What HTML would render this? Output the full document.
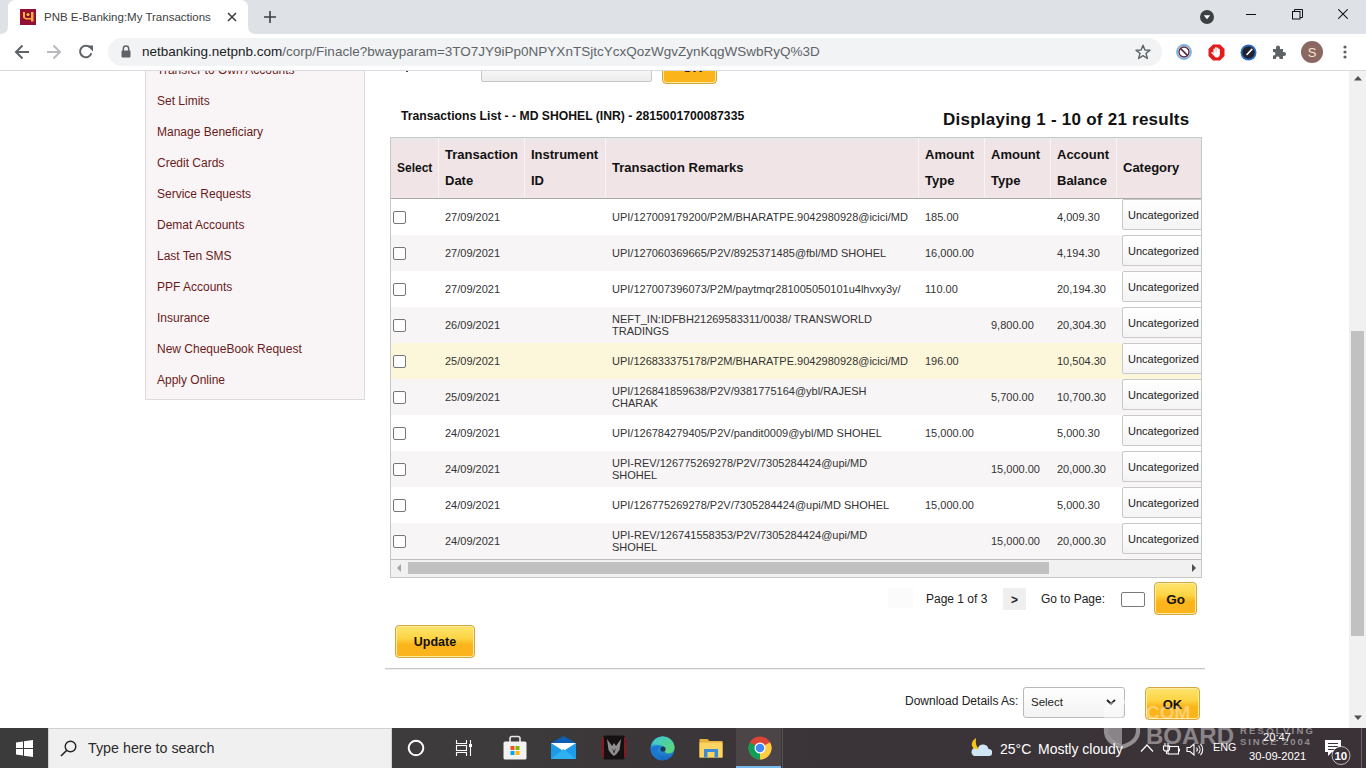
<!DOCTYPE html>
<html><head><meta charset="utf-8">
<style>
*{margin:0;padding:0;box-sizing:border-box}
html,body{width:1366px;height:768px;overflow:hidden;background:#fff;font-family:"Liberation Sans",sans-serif;position:relative}
.abs{position:absolute}
#tabbar{left:0;top:0;width:1366px;height:34px;background:#dee1e6}
#toolbar{left:0;top:34px;width:1366px;height:36px;background:#fff}
#sep{left:0;top:70px;width:1366px;height:1px;background:#d9dbde}
#urlpill{left:108px;top:38px;width:1054px;height:28px;background:#f1f3f4;border-radius:14px}
.ctext{color:#3c4043;font-size:12.5px;white-space:nowrap}
#page{left:0;top:71px;width:1350px;height:657px;background:#fff;overflow:hidden}
#vscroll{left:1349px;top:71px;width:17px;height:657px;background:#f1f1f1}

#side{left:145px;top:-100px;width:220px;height:429px;background:#f9f5f6;border:1px solid #dcdcdc}
.mi{position:absolute;left:157px;font-size:12px;color:#6a1b1b;white-space:nowrap;line-height:14px}
#tbl{position:absolute;left:390px;top:137px;width:812px;height:441px;border:1px solid #c6c7c7;overflow:hidden;background:#fff}
.hc{position:absolute;top:0;height:60px;background:linear-gradient(#e9e8e8 0px,#eee5e7 4px,#f0e4e6 8px,#f0e4e6 52px,#f2e6e8 60px);border-left:1px solid #faf3f4;font-weight:bold;color:#111;font-size:13px;line-height:26px}
.row{position:absolute;left:0;width:812px;height:36px;font-size:11px;color:#333;line-height:12px}
.row span{position:absolute;white-space:nowrap}
.cb{position:absolute;left:2px;top:12px;width:13px;height:13px;border:1px solid #767676;border-radius:2px;background:#fff}
.cat{position:absolute;left:731px;top:0px;width:90px;height:31px;border:1px solid #c9c9c9;border-radius:2px;background:linear-gradient(#fff,#f4f4f4);font-size:11px;color:#222;padding:9px 0 0 5px}

.ybtn{position:absolute;border:1px solid #d4a640;border-radius:4px;background:linear-gradient(#fde46e 0%,#fdd444 40%,#fbb51a 60%,#fbb41c 100%);font-weight:bold;color:#111;text-align:center;box-shadow:inset 0 0 0 1px #fdeca0}
.ptxt{position:absolute;font-size:12px;color:#222;white-space:nowrap;line-height:14px}
#taskbar{left:0;top:728px;width:1366px;height:40px;background:linear-gradient(90deg,#3e3d3e 0%,#3d3b3c 35%,#3a3337 60%,#3a3237 100%)}
</style></head><body>
<div id="tabbar" class="abs"></div>

<div id="toolbar" class="abs"></div>
<div id="sep" class="abs"></div>
<div id="urlpill" class="abs"></div>
<!-- tab -->
<svg class="abs" style="left:0;top:0" width="260" height="34">
 <path d="M0 34 Q8 34 8 26 L8 8 Q8 0 16 0 L240 0 Q248 0 248 8 L248 26 Q248 34 256 34 Z" fill="#fff"/>
</svg>
<svg class="abs" style="left:20px;top:9px" width="16" height="16" viewBox="0 0 16 16"><rect width="16" height="16" fill="#940f33"/><path d="M3 3 H5 V8 L6 9 H11 V3 H13.5 V12.5 H11 V10.5 H5.5 L3 8.5 Z" fill="#fbad3e"/><circle cx="8" cy="5.6" r="2.1" fill="#fbad3e" stroke="#6e0a1e" stroke-width="0.9"/></svg>
<div class="abs ctext" style="left:44px;top:9px;font-size:11.5px;line-height:16px">PNB E-Banking:My Transactions</div>
<svg class="abs" style="left:227px;top:12px" width="10" height="10" viewBox="0 0 10 10"><path d="M1 1 L9 9 M9 1 L1 9" stroke="#3c4043" stroke-width="1.6"/></svg>
<svg class="abs" style="left:264px;top:11px" width="12" height="12" viewBox="0 0 12 12"><path d="M6 0 V12 M0 6 H12" stroke="#3c4043" stroke-width="1.6"/></svg>
<!-- window controls -->
<svg class="abs" style="left:1199px;top:9px" width="16" height="16" viewBox="0 0 16 16"><circle cx="8" cy="8" r="7" fill="#3c4043"/><path d="M4.8 6.3 L11.2 6.3 L8 10.3 Z" fill="#fff"/></svg>
<div class="abs" style="left:1246px;top:14px;width:10px;height:1px;background:#111"></div>
<svg class="abs" style="left:1292px;top:9px" width="11" height="11" viewBox="0 0 11 11"><rect x="0.5" y="2.5" width="7.5" height="7.5" fill="none" stroke="#111"/><path d="M2.5 2.5 V0.5 H10.5 V8.5 H8" fill="none" stroke="#111"/></svg>
<svg class="abs" style="left:1338px;top:9px" width="10" height="10" viewBox="0 0 10 10"><path d="M0.3 0.3 L9.7 9.7 M9.7 0.3 L0.3 9.7" stroke="#111" stroke-width="1.05"/></svg>
<!-- nav -->
<svg class="abs" style="left:14px;top:44px" width="16" height="16" viewBox="0 0 16 16"><path d="M15 8 H2.5 M8.5 1.5 L2 8 L8.5 14.5" stroke="#5f6368" stroke-width="2" fill="none"/></svg>
<svg class="abs" style="left:46px;top:44px" width="16" height="16" viewBox="0 0 16 16"><path d="M1 8 H13.5 M7.5 1.5 L14 8 L7.5 14.5" stroke="#b7b9bc" stroke-width="2" fill="none"/></svg>
<svg class="abs" style="left:78px;top:44px" width="16" height="16" viewBox="0 0 16 16"><path d="M13.4 9.2 A5.8 5.8 0 1 1 12 3.4" stroke="#5f6368" stroke-width="2" fill="none"/><path d="M9 1.5 L15 1.5 L15 7.5 Z" fill="#5f6368"/></svg>
<!-- url -->
<svg class="abs" style="left:121px;top:45px" width="10" height="13" viewBox="0 0 10 13"><path d="M2.3 6 V3.8 A2.7 2.7 0 0 1 7.7 3.8 V6" stroke="#5f6368" stroke-width="1.5" fill="none"/><rect x="0.5" y="5.5" width="9" height="7" rx="1" fill="#5f6368"/></svg>
<div class="abs" style="left:142px;top:44px;font-size:13.5px;line-height:16px;white-space:nowrap;color:#5f6368"><span style="color:#202124">netbanking.netpnb.com</span>/corp/Finacle?bwayparam=3TO7JY9iPp0NPYXnTSjtcYcxQozWgvZynKqgWSwbRyQ%3D</div>
<svg class="abs" style="left:1135px;top:44px" width="16" height="16" viewBox="0 0 16 16"><path d="M8 1.2 L9.9 6 L15 6.2 L11 9.4 L12.4 14.5 L8 11.6 L3.6 14.5 L5 9.4 L1 6.2 L6.1 6 Z" fill="none" stroke="#5f6368" stroke-width="1.4" stroke-linejoin="round"/></svg>
<!-- extensions -->
<svg class="abs" style="left:1176px;top:44px" width="16" height="16" viewBox="0 0 16 16"><circle cx="8" cy="8" r="7" fill="#fff" stroke="#7fb0e0" stroke-width="1.8"/><circle cx="8" cy="8" r="5" fill="none" stroke="#5b2a3c" stroke-width="1.4"/><path d="M4.6 4.6 L11.4 11.4" stroke="#5b2a3c" stroke-width="1.6"/></svg>
<svg class="abs" style="left:1208px;top:44px" width="17" height="17" viewBox="0 0 17 17"><path d="M5 0.5 H12 L16.5 5 V12 L12 16.5 H5 L0.5 12 V5 Z" fill="#e21b1b"/><path d="M6.2 9.5 V5.2 M7.9 8.5 V3.8 M9.6 8.5 V4.2 M11.1 9 V5.4" stroke="#fff" stroke-width="1.5" stroke-linecap="round"/><path d="M5.5 8.5 Q5.5 13.5 9 13.5 Q12 13.5 11.9 8.5 Z" fill="#fff"/><path d="M5.6 10.5 L4 8.6" stroke="#fff" stroke-width="1.4" stroke-linecap="round"/></svg>
<svg class="abs" style="left:1240px;top:44px" width="17" height="17" viewBox="0 0 17 17"><circle cx="8.5" cy="8.5" r="8" fill="#2f6cc6"/><circle cx="8.5" cy="8.5" r="6.2" fill="#1f232b"/><path d="M7 10.5 L11.8 5.4" stroke="#fff" stroke-width="1.6" stroke-linecap="round"/></svg>
<svg class="abs" style="left:1271px;top:44px" width="16" height="16" viewBox="0 0 16 16"><path d="M2 5 H5 V3.5 A2 2 0 0 1 9 3.5 V5 H12 V8 H13 A2 2 0 0 1 13 12 H12 V15 H8.5 V14 A1.8 1.8 0 0 0 5 14 V15 H2 V11.5 H3 A1.8 1.8 0 0 0 3 8 H2 Z" fill="#5f6368"/></svg>
<svg class="abs" style="left:1301px;top:41px" width="22" height="22" viewBox="0 0 22 22"><circle cx="11" cy="11" r="11" fill="#8a6763"/><text x="11" y="15.6" text-anchor="middle" font-family="Liberation Sans" font-size="13" fill="#f5e8cc">S</text></svg>
<svg class="abs" style="left:1343px;top:45px" width="4" height="14" viewBox="0 0 4 14"><circle cx="2" cy="2" r="1.6" fill="#5f6368"/><circle cx="2" cy="7" r="1.6" fill="#5f6368"/><circle cx="2" cy="12" r="1.6" fill="#5f6368"/></svg>

<div id="page" class="abs">
<div style="position:absolute;left:0;top:0;width:1350px;height:657px">
<div id="side" class="abs"></div>
<div class="mi" style="top:-8px">Transfer to Own Accounts</div>
<div class="mi" style="top:23px">Set Limits</div>
<div class="mi" style="top:54px">Manage Beneficiary</div>
<div class="mi" style="top:85px">Credit Cards</div>
<div class="mi" style="top:116px">Service Requests</div>
<div class="mi" style="top:147px">Demat Accounts</div>
<div class="mi" style="top:178px">Last Ten SMS</div>
<div class="mi" style="top:209px">PPF Accounts</div>
<div class="mi" style="top:240px">Insurance</div>
<div class="mi" style="top:271px">New ChequeBook Request</div>
<div class="mi" style="top:302px">Apply Online</div>
</div>
</div>
<div id="tbl" class="abs">
<div class="hc" style="left:0px;width:47px;padding:17px 0 0 6px;border-left:none;font-size:12px;">Select</div>
<div class="hc" style="left:47px;width:86px;padding:4px 0 0 6px;">Transaction<br>Date</div>
<div class="hc" style="left:133px;width:81px;padding:4px 0 0 6px;">Instrument<br>ID</div>
<div class="hc" style="left:214px;width:313px;padding:17px 0 0 6px;">Transaction Remarks</div>
<div class="hc" style="left:527px;width:66px;padding:4px 0 0 6px;">Amount<br>Type</div>
<div class="hc" style="left:593px;width:66px;padding:4px 0 0 6px;">Amount<br>Type</div>
<div class="hc" style="left:659px;width:66px;padding:4px 0 0 6px;">Account<br>Balance</div>
<div class="hc" style="left:725px;width:94px;padding:17px 0 0 6px;">Category</div>
<div style="position:absolute;left:0;top:60px;width:812px;height:1px;background:#a9a9a9"></div>
<div class="row" style="top:61px;background:#fff">
<div class="cb"></div>
<span style="left:54px;top:12px">27/09/2021</span>
<span style="left:221px;top:12px">UPI/127009179200/P2M/BHARATPE.9042980928@icici/MD</span>
<span style="left:534px;top:12px">185.00</span>
<span style="left:666px;top:12px">4,009.30</span>
<div class="cat">Uncategorized</div>
</div>
<div class="row" style="top:97px;background:#f7f5f5">
<div class="cb"></div>
<span style="left:54px;top:12px">27/09/2021</span>
<span style="left:221px;top:12px">UPI/127060369665/P2V/8925371485@fbl/MD SHOHEL</span>
<span style="left:534px;top:12px">16,000.00</span>
<span style="left:666px;top:12px">4,194.30</span>
<div class="cat">Uncategorized</div>
</div>
<div class="row" style="top:133px;background:#fff">
<div class="cb"></div>
<span style="left:54px;top:12px">27/09/2021</span>
<span style="left:221px;top:12px">UPI/127007396073/P2M/paytmqr281005050101u4lhvxy3y/</span>
<span style="left:534px;top:12px">110.00</span>
<span style="left:666px;top:12px">20,194.30</span>
<div class="cat">Uncategorized</div>
</div>
<div class="row" style="top:169px;background:#f7f5f5">
<div class="cb"></div>
<span style="left:54px;top:12px">26/09/2021</span>
<span style="left:221px;top:6px">NEFT_IN:IDFBH21269583311/0038/ TRANSWORLD<br>TRADINGS</span>
<span style="left:600px;top:12px">9,800.00</span>
<span style="left:666px;top:12px">20,304.30</span>
<div class="cat">Uncategorized</div>
</div>
<div class="row" style="top:205px;background:#fcf7da">
<div class="cb"></div>
<span style="left:54px;top:12px">25/09/2021</span>
<span style="left:221px;top:12px">UPI/126833375178/P2M/BHARATPE.9042980928@icici/MD</span>
<span style="left:534px;top:12px">196.00</span>
<span style="left:666px;top:12px">10,504.30</span>
<div class="cat">Uncategorized</div>
</div>
<div class="row" style="top:241px;background:#f7f5f5">
<div class="cb"></div>
<span style="left:54px;top:12px">25/09/2021</span>
<span style="left:221px;top:6px">UPI/126841859638/P2V/9381775164@ybl/RAJESH<br>CHARAK</span>
<span style="left:600px;top:12px">5,700.00</span>
<span style="left:666px;top:12px">10,700.30</span>
<div class="cat">Uncategorized</div>
</div>
<div class="row" style="top:277px;background:#fff">
<div class="cb"></div>
<span style="left:54px;top:12px">24/09/2021</span>
<span style="left:221px;top:12px">UPI/126784279405/P2V/pandit0009@ybl/MD SHOHEL</span>
<span style="left:534px;top:12px">15,000.00</span>
<span style="left:666px;top:12px">5,000.30</span>
<div class="cat">Uncategorized</div>
</div>
<div class="row" style="top:313px;background:#f7f5f5">
<div class="cb"></div>
<span style="left:54px;top:12px">24/09/2021</span>
<span style="left:221px;top:6px">UPI-REV/126775269278/P2V/7305284424@upi/MD<br>SHOHEL</span>
<span style="left:600px;top:12px">15,000.00</span>
<span style="left:666px;top:12px">20,000.30</span>
<div class="cat">Uncategorized</div>
</div>
<div class="row" style="top:349px;background:#fff">
<div class="cb"></div>
<span style="left:54px;top:12px">24/09/2021</span>
<span style="left:221px;top:12px">UPI/126775269278/P2V/7305284424@upi/MD SHOHEL</span>
<span style="left:534px;top:12px">15,000.00</span>
<span style="left:666px;top:12px">5,000.30</span>
<div class="cat">Uncategorized</div>
</div>
<div class="row" style="top:385px;background:#f7f5f5">
<div class="cb"></div>
<span style="left:54px;top:12px">24/09/2021</span>
<span style="left:221px;top:6px">UPI-REV/126741558353/P2V/7305284424@upi/MD<br>SHOHEL</span>
<span style="left:600px;top:12px">15,000.00</span>
<span style="left:666px;top:12px">20,000.30</span>
<div class="cat">Uncategorized</div>
</div>
<div style="position:absolute;left:0;top:421px;width:812px;height:1px;background:#bdbdbd"></div>
<div style="position:absolute;left:0;top:422px;width:812px;height:17px;background:#f1f1f1"></div>
<div style="position:absolute;left:17px;top:424px;width:641px;height:12px;background:#c1c1c1"></div>
<svg style="position:absolute;left:5px;top:426px" width="6" height="8"><path d="M5 0 L1 4 L5 8 Z" fill="#a3a3a3"/></svg>
<svg style="position:absolute;left:800px;top:426px" width="6" height="8"><path d="M1 0 L5 4 L1 8 Z" fill="#505050"/></svg>
</div>

<div id="vscroll" class="abs"></div>
<!-- top partial controls -->
<div class="abs" style="left:0;top:71px;width:1350px;height:30px;overflow:hidden">
<div class="abs" style="left:406px;top:-1px;width:2px;height:2px;background:#444"></div>
<div class="abs" style="left:481px;top:-11px;width:171px;height:22px;border:1px solid #c7c7c7;border-radius:2px;background:linear-gradient(#fff,#ececec)"></div>
<div class="ybtn" style="left:662px;top:-21px;width:55px;height:34px"></div>
<div class="abs" style="left:682px;top:-11px;font-size:13.5px;line-height:15px;font-weight:bold;color:#222;white-space:nowrap">OK</div>
</div>
<!-- titles -->
<div class="ptxt" style="left:401px;top:109px;font-weight:bold;color:#111;font-size:12.2px">Transactions List - - MD SHOHEL (INR) - 2815001700087335</div>
<div class="ptxt" style="left:943px;top:110px;font-size:17px;line-height:20px;font-weight:bold;color:#111;letter-spacing:0.24px">Displaying 1 - 10 of 21 results</div>
<!-- pagination -->
<div class="abs" style="left:888px;top:588px;width:25px;height:20px;background:#fbfbfb"></div>
<div class="ptxt" style="left:926px;top:592px">Page 1 of 3</div>
<div class="abs" style="left:1003px;top:588px;width:23px;height:22px;background:#efeff0"></div>
<div class="ptxt" style="left:1011px;top:593px;font-weight:bold">&gt;</div>
<div class="ptxt" style="left:1041px;top:592px">Go to Page:</div>
<div class="abs" style="left:1121px;top:592px;width:24px;height:15px;border:1px solid #7a7a7a;border-radius:2px;background:#fff"></div>
<div class="ybtn" style="left:1154px;top:582px;width:43px;height:33px;font-size:13.5px;line-height:33px">Go</div>
<!-- update -->
<div class="ybtn" style="left:395px;top:625px;width:80px;height:33px;font-size:12.5px;line-height:32px">Update</div>
<div class="abs" style="left:385px;top:668px;width:820px;height:1px;background:#c9c9c9"></div>
<div class="abs" style="left:385px;top:669px;width:820px;height:1px;background:#ededed"></div>
<!-- download -->
<div class="ptxt" style="left:905px;top:694px">Download Details As:</div>
<div class="abs" style="left:1023px;top:687px;width:102px;height:31px;border:1px solid #b9b9b9;border-radius:3px;background:linear-gradient(#fff,#f2f2f2)"></div>
<div class="ptxt" style="left:1031px;top:695px;font-size:11.5px">Select</div>
<svg class="abs" style="left:1106px;top:699px" width="10" height="7" viewBox="0 0 10 7"><path d="M1 1 L5 5 L9 1" stroke="#222" stroke-width="1.8" fill="none"/></svg>
<div class="ybtn" style="left:1145px;top:687px;width:55px;height:33px;font-size:13px;line-height:33px">OK</div>
<!-- vertical scrollbar -->
<div class="abs" style="left:1351px;top:331px;width:13px;height:305px;background:#c1c1c1"></div>
<svg class="abs" style="left:1353px;top:75px" width="10" height="6"><path d="M1 5.5 L5 1 L9 5.5 Z" fill="#505050"/></svg>
<svg class="abs" style="left:1353px;top:715px" width="10" height="6"><path d="M1 0.5 L5 5 L9 0.5 Z" fill="#505050"/></svg>
<div id="taskbar" class="abs"></div>
<div class="abs" style="left:0;top:728px;width:48px;height:40px;background:#3c3b3c"></div>
<svg class="abs" style="left:16px;top:740px" width="17" height="17" viewBox="0 0 17 17"><path d="M0 2.4 L7 1.4 V8 H0 Z M8 1.2 L17 0 V8 H8 Z M0 9 H7 V15.6 L0 14.6 Z M8 9 H17 V17 L8 15.8 Z" fill="#fff"/></svg>
<div class="abs" style="left:48px;top:728px;width:344px;height:40px;background:#f0f0f0;border:1px solid #d0d0d0;border-bottom:none"></div>
<svg class="abs" style="left:60px;top:740px" width="17" height="17" viewBox="0 0 17 17"><circle cx="10.5" cy="6.5" r="5.3" fill="none" stroke="#222" stroke-width="1.4"/><path d="M6.8 10.2 L1 16" stroke="#222" stroke-width="1.6"/></svg>
<div class="abs" style="left:88px;top:739px;font-size:14.3px;line-height:18px;color:#2b2b2b;white-space:nowrap">Type here to search</div>
<svg class="abs" style="left:406px;top:738px" width="20" height="20" viewBox="0 0 20 20"><circle cx="10" cy="10" r="7.3" fill="none" stroke="#fff" stroke-width="2"/></svg>
<svg class="abs" style="left:455px;top:739px" width="18" height="18" viewBox="0 0 18 18"><path d="M1.5 1 V4.5 H11.5 V1 M1.5 17 V13.5 H11.5 V17" fill="none" stroke="#fff" stroke-width="1.1"/><rect x="1.5" y="6.5" width="10" height="5" fill="none" stroke="#fff" stroke-width="1.1"/><path d="M15.5 1 V17" stroke="#fff" stroke-width="1.1"/><rect x="14" y="5" width="3" height="3" fill="#fff"/></svg>
<!-- store -->
<svg class="abs" style="left:503px;top:735px" width="24" height="25" viewBox="0 0 24 25"><path d="M7 7 V3.5 A2 2 0 0 1 9 1.5 H15 A2 2 0 0 1 17 3.5 V7" fill="none" stroke="#e8e8e8" stroke-width="1.6"/><rect x="0.5" y="6.5" width="23" height="18" rx="1.5" fill="#f2f2f2"/><rect x="7.5" y="11" width="4" height="4" fill="#f25022"/><rect x="12.5" y="11" width="4" height="4" fill="#7fba00"/><rect x="7.5" y="16" width="4" height="4" fill="#00a4ef"/><rect x="12.5" y="16" width="4" height="4" fill="#ffb900"/></svg>
<!-- mail -->
<svg class="abs" style="left:551px;top:736px" width="25" height="23" viewBox="0 0 25 23"><path d="M0 7 L12.5 0 L25 7 V23 H0 Z" fill="#0a5fb4"/><rect x="0" y="7" width="25" height="16" fill="#1e9be8"/><path d="M0 7 L12.5 15 L25 7 Z" fill="#fff"/><path d="M0 23 L12.5 13 L25 23 Z" fill="#2fb0f0"/></svg>
<!-- predator -->
<svg class="abs" style="left:601px;top:735px" width="26" height="25" viewBox="0 0 26 25"><rect x="2" y="0.5" width="22" height="24" rx="2" fill="#151112"/><path d="M0.5 4 Q0.5 2 3 2 V23 Q0.5 23 0.5 21 Z M25.5 4 Q25.5 2 23 2 V23 Q25.5 23 25.5 21 Z" fill="#7d1c22"/><path d="M6 4 L11 11 L13 8 L15 11 L20 4 L18.5 15 L15.5 19 L13 21 L10.5 19 L7.5 15 Z" fill="#8f8f8f"/><path d="M11 13 L13 16 L15 13 L13 19 Z" fill="#2a2a2a"/></svg>
<!-- edge -->
<svg class="abs" style="left:650px;top:736px" width="25" height="25" viewBox="0 0 25 25"><defs><linearGradient id="eg1" x1="0" y1="0" x2="0" y2="1"><stop offset="0" stop-color="#38b9e6"/><stop offset="1" stop-color="#1565c0"/></linearGradient><linearGradient id="eg2" x1="0" y1="0" x2="1" y2="1"><stop offset="0" stop-color="#3cc8d8"/><stop offset="1" stop-color="#62d86a"/></linearGradient></defs><circle cx="12.5" cy="12.5" r="12" fill="url(#eg1)"/><path d="M1.5 9 Q4 1 12.5 0.5 Q22 0.5 24.5 10 Q25 17 19 17.5 Q14.5 17.5 14.5 14 Q15 10.5 12 9.5 Q6 8 1.5 9 Z" fill="url(#eg2)"/><circle cx="13" cy="13" r="2.6" fill="#1d3558"/><path d="M1 12 Q1 22 12 24.5 Q6 20 7.5 14 Q9 10 13 10.5 Q6 8.5 1 12 Z" fill="#1a78d4"/></svg>
<!-- explorer -->
<svg class="abs" style="left:699px;top:738px" width="24" height="21" viewBox="0 0 24 21"><path d="M0.5 1 H8.5 L10.5 3 H23.5 V19.5 H0.5 Z" fill="#e8b13a"/><rect x="0.5" y="4.5" width="23" height="15" fill="#fcd462"/><path d="M5 19.5 V11 H19 V19.5 H15.5 V14 H8.5 V19.5 Z" fill="#3a8ad8"/></svg>
<!-- chrome -->
<div class="abs" style="left:736px;top:728px;width:45px;height:40px;background:#4b4547"></div>
<div class="abs" style="left:736px;top:766px;width:45px;height:2px;background:#76b9ed"></div>
<svg class="abs" style="left:748px;top:736px" width="24" height="24" viewBox="0 0 24 24"><circle cx="12" cy="12" r="11.5" fill="#db4437"/><path d="M12 12 L22 6.2 A11.5 11.5 0 0 1 12 23.5 Z" fill="#ffcd40"/><path d="M12 12 L12 23.5 A11.5 11.5 0 0 1 2 6.2 Z" fill="#0f9d58"/><path d="M12 12 L2 6.2 A11.5 11.5 0 0 1 6 2.5 L12 12Z" fill="#db4437"/><circle cx="12" cy="12" r="5.5" fill="#fff"/><circle cx="12" cy="12" r="4.3" fill="#4285f4"/></svg>
<div class="abs" style="left:782px;top:728px;width:1px;height:40px;background:#555"></div>
<!-- weather -->
<svg class="abs" style="left:968px;top:737px" width="24" height="20" viewBox="0 0 24 20"><path d="M6 19 H21 A3.5 3.5 0 0 0 20.5 12 A5.5 5.5 0 0 0 10 11 A4 4 0 0 0 6 19Z" fill="#cfe6f5"/><path d="M8 1 Q3 4 4 9 Q6 13 11 12 Q7 9 8 1Z" fill="#f5c518"/></svg>
<div class="abs" style="left:1000px;top:740px;font-size:14px;line-height:18px;color:#fff;white-space:nowrap">25°C</div>
<div class="abs" style="left:1038px;top:740px;font-size:14px;line-height:18px;color:#fff;white-space:nowrap">Mostly cloudy</div>
<!-- tray -->
<svg class="abs" style="left:1140px;top:744px" width="14" height="8" viewBox="0 0 14 8"><path d="M1 7.5 L7 1 L13 7.5" fill="none" stroke="#fff" stroke-width="1.2"/></svg>
<svg class="abs" style="left:1162px;top:743px" width="18" height="12" viewBox="0 0 18 12"><path d="M3 0 V3 M6 0 V3 M1.5 3 H7.5 V6 Q7.5 8 4.5 8 Q1.5 8 1.5 6 Z M4.5 8 V11" stroke="#fff" stroke-width="1.1" fill="none"/><rect x="6" y="3.5" width="10.5" height="7.5" fill="none" stroke="#fff" stroke-width="1.1"/><rect x="16.5" y="5.5" width="1.5" height="3" fill="#fff"/></svg>
<svg class="abs" style="left:1186px;top:743px" width="18" height="13" viewBox="0 0 18 13"><path d="M1 4.5 H4 L8 1 V12 L4 8.5 H1 Z" fill="none" stroke="#fff" stroke-width="1.1"/><path d="M10.5 4.5 A3 3 0 0 1 10.5 8.5 M12.5 2.5 A6 6 0 0 1 12.5 10.5 M14.5 0.8 A8.5 8.5 0 0 1 14.5 12.2" fill="none" stroke="#fff" stroke-width="1.1"/></svg>
<div class="abs" style="left:1213px;top:741px;font-size:10.8px;line-height:13px;color:#fff;white-space:nowrap">ENG</div>
<div class="abs" style="left:1263px;top:731px;font-size:11.2px;line-height:13px;color:#fff;white-space:nowrap">20:47</div>
<div class="abs" style="left:1249px;top:750px;font-size:11.2px;line-height:13px;color:#fff;white-space:nowrap">30-09-2021</div>
<svg class="abs" style="left:1323px;top:739px" width="30" height="28" viewBox="0 0 30 28"><path d="M2 1 H18 V13 H9 L5 17 V13 H2 Z" fill="#fff"/><path d="M5 4.5 H15 M5 7.5 H15 M5 10.5 H12" stroke="#3a3237" stroke-width="1.1"/><circle cx="18" cy="16.5" r="9" fill="#3a3237" stroke="rgba(255,255,255,0.65)" stroke-width="1"/><text x="17.8" y="20.8" text-anchor="middle" font-family="Liberation Sans" font-weight="bold" font-size="11.5" fill="#fff">10</text></svg>
<div class="abs" style="left:1361px;top:728px;width:1px;height:40px;background:#6a6468"></div>
<!-- watermark -->
<div class="abs" style="left:0;top:0;width:1366px;height:768px;pointer-events:none">
<svg class="abs" style="left:1103px;top:698px" width="38" height="52" viewBox="0 0 38 52"><path d="M19 3 L35 9 V33 Q35 44 19 49 Q3 44 3 33 V9 Z" fill="none" stroke="rgba(255,255,255,0.45)" stroke-width="4.2"/><path d="M19 5 L5 10.5 V33 Q5 43 19 47 Z" fill="rgba(255,255,255,0.40)"/></svg>
<div class="abs" style="left:1146px;top:722px;font-size:24px;line-height:28px;font-weight:bold;color:rgba(255,255,255,0.42);white-space:nowrap">BOARD</div>
<div class="abs" style="left:1146px;top:699px;width:54px;height:22px;overflow:hidden"><div style="position:absolute;left:0;top:2px;font-size:19px;line-height:24px;font-weight:bold;color:rgba(255,255,255,0.38);white-space:nowrap">COM</div></div>
<div class="abs" style="left:1240px;top:726px;font-size:9.5px;line-height:10px;font-weight:bold;letter-spacing:2.2px;color:rgba(255,255,255,0.45);white-space:nowrap">RESOLVING</div>
<div class="abs" style="left:1240px;top:737px;font-size:9.5px;line-height:10px;font-weight:bold;letter-spacing:1.9px;color:rgba(255,255,255,0.45);white-space:nowrap">SINCE 2004</div>
</div>
</body></html>
